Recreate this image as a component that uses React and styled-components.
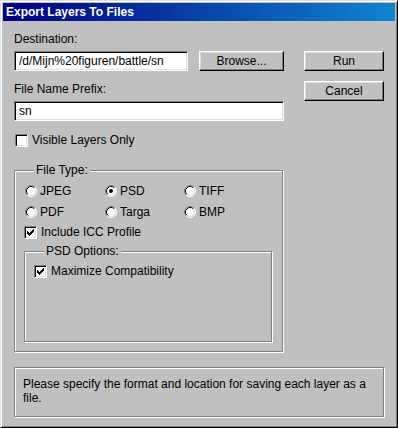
import React from 'react';
import styled, { createGlobalStyle } from 'styled-components';

const GlobalStyle = createGlobalStyle`
  html, body {
    margin: 0;
    padding: 0;
    background: #c0c0c0;
  }

  body {
    font-family: "Liberation Sans", Arial, sans-serif;
    font-size: 12px;
    color: #000;
  }
`;

const Window = styled.div`
  box-sizing: border-box;
  width: 398px;
  height: 428px;
  padding: 2px;
  background: #c0c0c0;
  border: 1px solid;
  border-color: #dfdfdf #000 #000 #dfdfdf;
  box-shadow: inset 1px 1px 0 #fff, inset -1px -1px 0 #808080;
`;

const TitleBar = styled.div`
  display: flex;
  align-items: center;
  height: 18px;
  padding-left: 3px;
  background: linear-gradient(to right, #000080, #1084d0);
  color: #fff;
  font-weight: bold;
  font-size: 12px;
  white-space: nowrap;
`;

const Body = styled.div`
  padding: 11px 10px 0 11px;
`;

const TopRow = styled.div`
  display: flex;
  gap: 20px;
`;

const LeftColumn = styled.div`
  display: flex;
  flex-direction: column;
  width: 270px;
`;

const RightColumn = styled.div`
  display: flex;
  flex-direction: column;
  gap: 10px;
  width: 80px;
  padding-top: 19px;
`;

const FieldLabel = styled.div`
  height: 14px;
  line-height: 14px;
  margin-top: ${({ $top }) => $top || 0}px;
  margin-bottom: 5px;
`;

const FieldRow = styled.div`
  display: flex;
  gap: 11px;
`;

const TextField = styled.input`
  box-sizing: border-box;
  width: ${({ $width }) => $width}px;
  height: 20px;
  margin: 0;
  padding: 0 4px;
  font: inherit;
  color: #000;
  background: #fff;
  border: 1px solid;
  border-color: #808080 #fff #fff #808080;
  box-shadow: inset 1px 1px 0 #000, inset -1px -1px 0 #dfdfdf;
  outline: none;
`;

const Button = styled.button`
  box-sizing: border-box;
  width: ${({ $width }) => $width || 80}px;
  height: 20px;
  margin: 0;
  padding: 0;
  font: inherit;
  color: #000;
  background: #c0c0c0;
  border: 1px solid;
  border-color: #fff #000 #000 #fff;
  box-shadow: inset -1px -1px 0 #808080, inset 1px 1px 0 #dfdfdf;
`;

const CheckRow = styled.label`
  display: flex;
  align-items: center;
  gap: 4px;
  height: 20px;
  margin-top: ${({ $top }) => $top || 0}px;
  margin-left: ${({ $left }) => $left || 0}px;
  white-space: nowrap;
`;

const CheckBox = styled.span`
  box-sizing: border-box;
  display: flex;
  align-items: center;
  justify-content: center;
  width: 13px;
  height: 13px;
  background: #fff;
  border: 1px solid;
  border-color: #808080 #fff #fff #808080;
  box-shadow: inset 1px 1px 0 #000, inset -1px -1px 0 #dfdfdf;
`;

const Group = styled.div`
  position: relative;
  box-sizing: border-box;
  width: ${({ $width }) => $width}px;
  height: ${({ $height }) => $height}px;
  margin-top: ${({ $top }) => $top || 0}px;
  margin-left: ${({ $left }) => $left || 0}px;
  padding: ${({ $pad }) => $pad};
  border: 1px solid #808080;
  box-shadow: inset 1px 1px 0 #fff, 1px 1px 0 #fff;
`;

const Legend = styled.span`
  position: absolute;
  top: -8px;
  left: ${({ $left }) => $left}px;
  padding: 0 2px;
  line-height: 14px;
  background: #c0c0c0;
`;

const RadioGrid = styled.div`
  display: grid;
  grid-template-columns: 80px 79px auto;
  grid-auto-rows: 20px;
  row-gap: 1px;
`;

const Option = styled.label`
  display: flex;
  align-items: center;
  gap: 3px;
`;

const StatusBox = styled.div`
  box-sizing: border-box;
  width: 370px;
  height: 50px;
  margin-top: 15px;
  padding: 9px 8px 0;
  line-height: 14px;
  border: 1px solid #808080;
  box-shadow: inset 1px 1px 0 #fff, 1px 1px 0 #fff;
`;

const CheckMark = () => (
  <svg width="7" height="7" viewBox="0 0 7 7" shapeRendering="crispEdges">
    <path
      fill="#000"
      d="M0 2h1v3H0zM1 3h1v3H1zM2 4h1v3H2zM3 3h1v3H3zM4 2h1v3H4zM5 1h1v3H5zM6 0h1v3H6z"
    />
  </svg>
);

const Radio = ({ checked }) => (
  <svg width="12" height="12" viewBox="0 0 12 12">
    <circle cx="6" cy="6" r="5" fill="#fff" />
    <path d="M2.11 9.89A5.5 5.5 0 0 1 9.89 2.11" fill="none" stroke="#808080" />
    <path d="M9.89 2.11A5.5 5.5 0 0 1 2.11 9.89" fill="none" stroke="#fff" />
    <path d="M2.82 9.18A4.5 4.5 0 0 1 9.18 2.82" fill="none" stroke="#000" />
    <path d="M9.18 2.82A4.5 4.5 0 0 1 2.82 9.18" fill="none" stroke="#dfdfdf" />
    {checked && <circle cx="6" cy="6" r="2" fill="#000" />}
  </svg>
);

const Check = ({ checked, children, ...rest }) => (
  <CheckRow {...rest}>
    <CheckBox>{checked && <CheckMark />}</CheckBox>
    <span>{children}</span>
  </CheckRow>
);

const fileTypes = [
  { name: 'JPEG' },
  { name: 'PSD', checked: true },
  { name: 'TIFF' },
  { name: 'PDF' },
  { name: 'Targa' },
  { name: 'BMP' },
];

const App = () => (
  <>
    <GlobalStyle />
    <Window>
      <TitleBar>Export Layers To Files</TitleBar>

      <Body>
        <TopRow>
          <LeftColumn>
            <FieldLabel>Destination:</FieldLabel>
            <FieldRow>
              <TextField $width={174} defaultValue="/d/Mijn%20figuren/battle/sn" readOnly />
              <Button $width={85}>Browse...</Button>
            </FieldRow>

            <FieldLabel $top={11}>File Name Prefix:</FieldLabel>
            <TextField $width={270} defaultValue="sn" readOnly />

            <Check $top={9} $left={1}>Visible Layers Only</Check>

            <Group $width={269} $height={182} $top={20} $pad="10px 0 0 10px">
              <Legend $left={19}>File Type:</Legend>
              <RadioGrid>
                {fileTypes.map(({ name, checked }) => (
                  <Option key={name}>
                    <Radio checked={checked} />
                    <span>{name}</span>
                  </Option>
                ))}
              </RadioGrid>

              <Check checked $left={-1}>Include ICC Profile</Check>

              <Group $width={248} $height={91} $top={9} $left={-1} $pad="9px 0 0 9px">
                <Legend $left={19}>PSD Options:</Legend>
                <Check checked>Maximize Compatibility</Check>
              </Group>
            </Group>
          </LeftColumn>

          <RightColumn>
            <Button>Run</Button>
            <Button>Cancel</Button>
          </RightColumn>
        </TopRow>

        <StatusBox>
          Please specify the format and location for saving each layer as a file.
        </StatusBox>
      </Body>
    </Window>
  </>
);

export default App;
